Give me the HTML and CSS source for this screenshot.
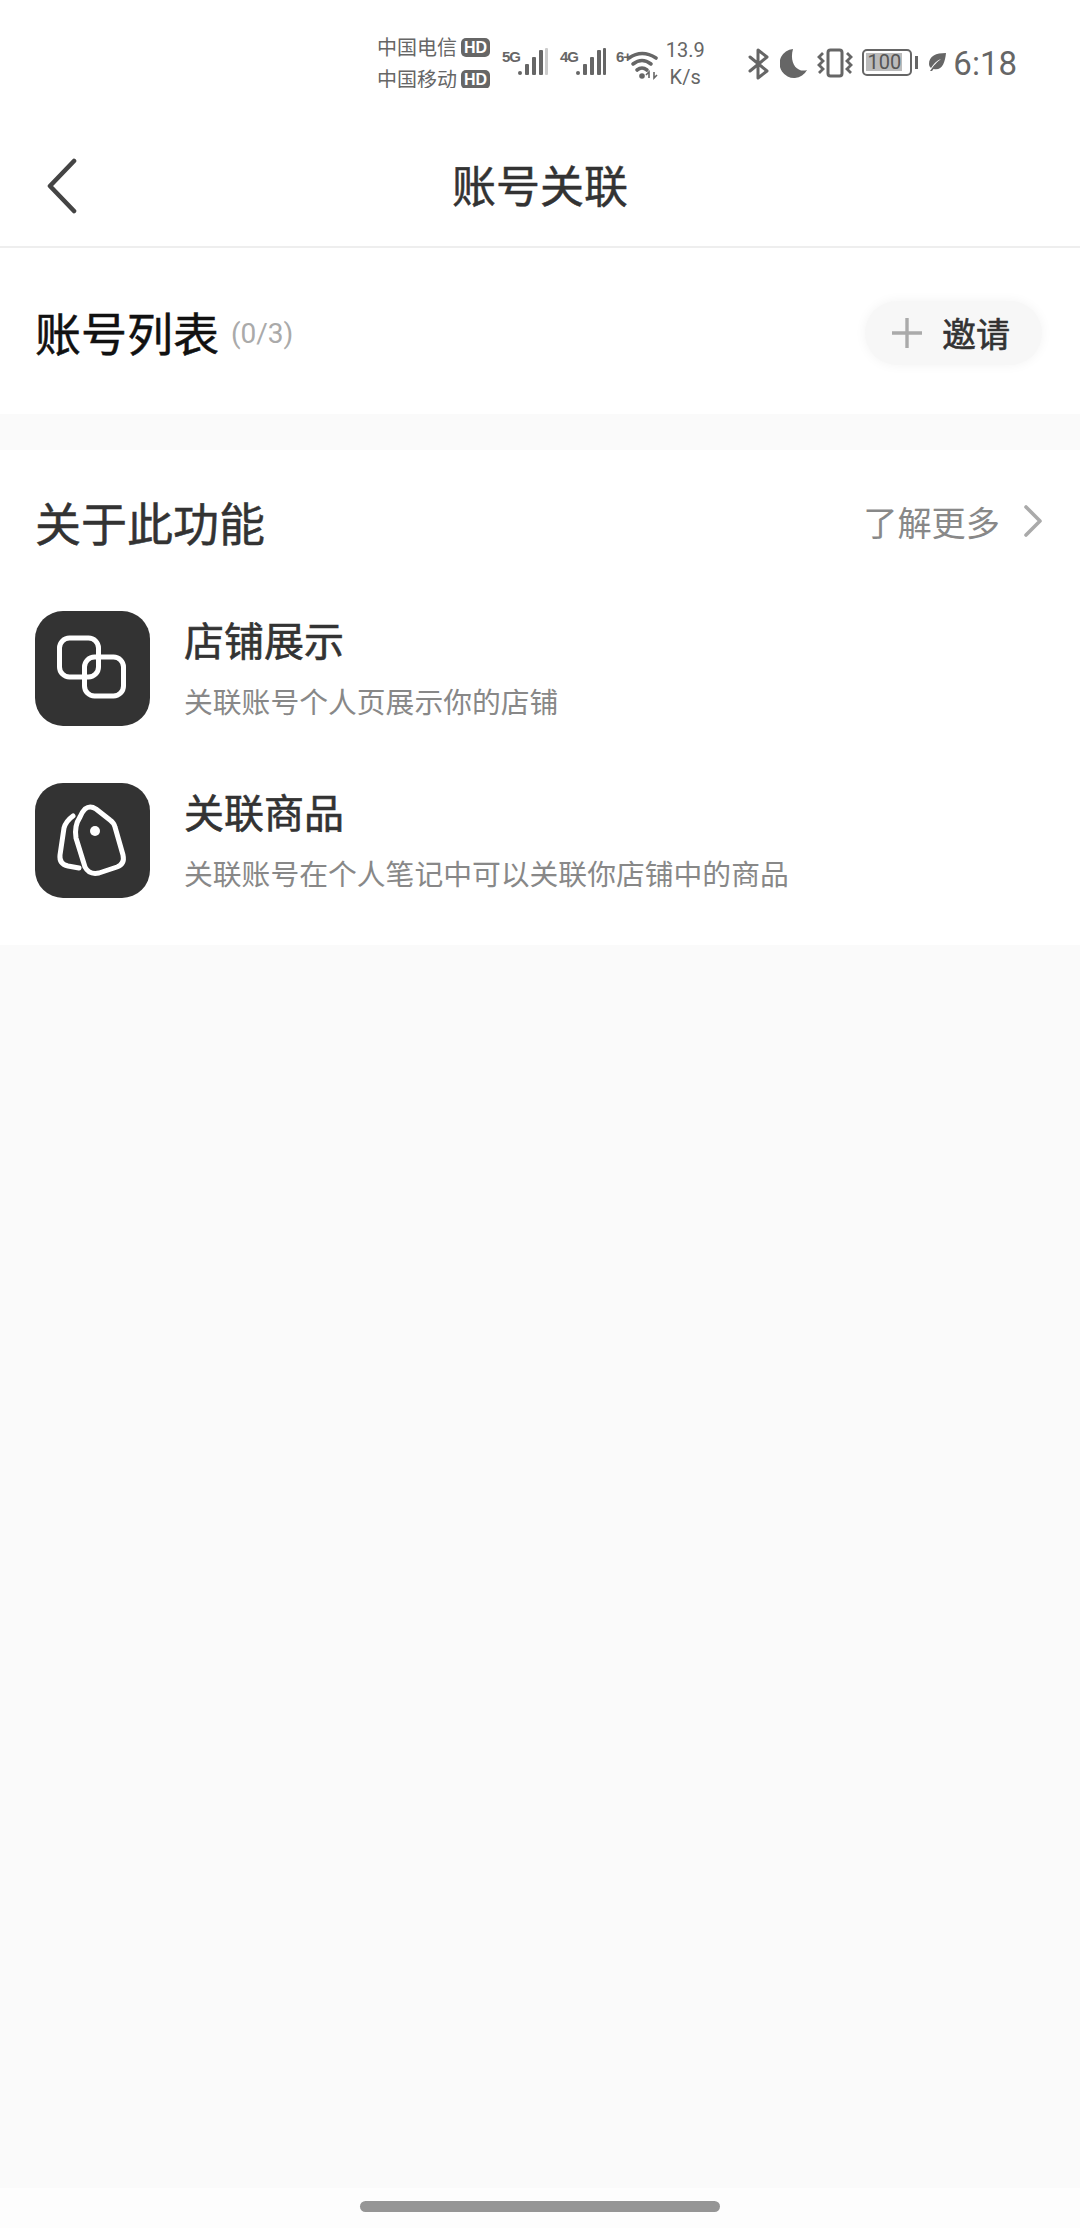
FILE: index.html
```html
<!DOCTYPE html>
<html>
<head>
    <title>账号关联</title>
    <meta charset="utf-8">
    <link rel="stylesheet" href="styles.css">
</head>
<body>
    <div class="status-bar">
        <div class="carriers">
            <div class="carrier">中国电信<span class="hd">HD</span></div>
            <div class="carrier">中国移动<span class="hd">HD</span></div>
        </div>
        <div class="signal">
            <span class="net">5G</span>
            <svg width="31" height="30" viewBox="0 0 31 30"><g fill="#666"><rect x="0" y="24" width="4" height="4" rx="2"/><rect x="7" y="17" width="4" height="11" rx="1"/><rect x="14" y="10" width="4" height="18" rx="1"/><rect x="21" y="3" width="4" height="25" rx="1"/></g><rect x="27" y="1" width="3" height="27" rx="1" fill="#ccc"/></svg>
        </div>
        <div class="signal">
            <span class="net">4G</span>
            <svg width="31" height="30" viewBox="0 0 31 30"><g fill="#666"><rect x="0" y="24" width="4" height="4" rx="2"/><rect x="7" y="17" width="4" height="11" rx="1"/><rect x="14" y="10" width="4" height="18" rx="1"/><rect x="21" y="3" width="4" height="25" rx="1"/><rect x="27" y="1" width="3" height="27" rx="1"/></g></svg>
        </div>
        <div class="wifi">
            <span class="net net-wifi">6+</span>
            <svg width="31" height="32" viewBox="0 0 31 32"><g fill="none" stroke="#666" stroke-width="3.6" stroke-linecap="round"><path d="M2 10 Q15 1 29 10"/><path d="M6 16 Q15 9 24 16"/><path d="M10 22 Q15 18 20 22"/></g><circle cx="15" cy="28" r="2.8" fill="#666"/><path d="M22 30v-6l-3 3M27 24v6l3-3" fill="none" stroke="#666" stroke-width="1.6"/></svg>
        </div>
        <div class="speed"><span>13.9</span><span>K/s</span></div>
        <svg class="ic-bt" width="22" height="32" viewBox="0 0 22 32"><path d="M2 9 L19 23 L10 30 V2 L19 9 L2 23" fill="none" stroke="#666" stroke-width="3" stroke-linejoin="round" stroke-linecap="round"/></svg>
        <svg class="ic-moon" width="28" height="30" viewBox="0 0 28 30"><path d="M13 1 A14.5 14.5 0 1 0 27 22 C17 25 9 15 13 1Z" fill="#666"/></svg>
        <svg class="ic-vib" width="36" height="30" viewBox="0 0 36 30"><rect x="11" y="2" width="14" height="26" rx="2.5" fill="none" stroke="#666" stroke-width="3"/><g fill="none" stroke="#666" stroke-width="2.8"><path d="M6 5 L2 9 L6 13 L2 17 L6 21 L2 25"/><path d="M30 5 L34 9 L30 13 L34 17 L30 21 L34 25"/></g></svg>
        <div class="battery"><div class="battery-box"><span class="battery-fill">100</span></div><i class="battery-nub"></i></div>
        <svg class="ic-leaf" width="20" height="20" viewBox="0 0 20 20"><path d="M19 1 C9 1 2 4 2 12 C2 14 3 15 4 16 C8 10 11 8 14 7 C10 10 7 13 3 19 L5 19 L6.5 17 C15 19 18 11 19 1Z" fill="#666"/></svg>
        <span class="clock">6:18</span>
    </div>

    <div class="nav-bar">
        <svg class="back" width="32" height="56" viewBox="0 0 32 56"><path d="M28 3 L4 28 L28 53" fill="none" stroke="#444" stroke-width="4.6" stroke-linecap="round" stroke-linejoin="round"/></svg>
        <h1 class="nav-title">账号关联</h1>
    </div>

    <div class="section account-list">
        <div class="account-head">
            <span class="section-title">账号列表</span>
            <span class="count">(0/3)</span>
        </div>
        <div class="invite">
            <svg width="30" height="30" viewBox="0 0 30 30"><path d="M15 0V30M0 15H30" stroke="#aaa" stroke-width="3.4"/></svg>
            <span>邀请</span>
        </div>
    </div>

    <div class="section about">
        <div class="about-head">
            <span class="about-title">关于此功能</span>
            <div class="more">
                <span>了解更多</span>
                <svg width="20" height="32" viewBox="0 0 20 32"><path d="M3 2 L17 16 L3 30" fill="none" stroke="#aaa" stroke-width="3.6" stroke-linecap="round" stroke-linejoin="round"/></svg>
            </div>
        </div>

        <div class="feature">
            <div class="feature-icon">
                <svg width="115" height="115" viewBox="0 0 115 115"><g fill="none" stroke="#fff" stroke-width="5"><rect x="24.5" y="27" width="39" height="39" rx="10"/><rect x="49.5" y="46" width="39" height="39" rx="10"/></g></svg>
            </div>
            <div class="feature-text">
                <div class="feature-name">店铺展示</div>
                <div class="feature-desc">关联账号个人页展示你的店铺</div>
            </div>
        </div>

        <div class="feature">
            <div class="feature-icon">
                <svg width="115" height="115" viewBox="0 0 115 115"><g fill="none" stroke="#fff" stroke-width="5" stroke-linecap="round" stroke-linejoin="round"><path d="M45 34 Q47 29 50 26 Q55 22 61 26 L75 37 Q79 40 80 44 L88 72 Q90 81 82 84 L64 90 Q54 92 50 84 L41 55 Q39 43 45 34Z"/><path d="M38 33 Q31 38 29 45 L25 72 Q24 81 33 83 L44 85"/></g><circle cx="60" cy="48" r="5" fill="#fff"/></svg>
            </div>
            <div class="feature-text">
                <div class="feature-name">关联商品</div>
                <div class="feature-desc">关联账号在个人笔记中可以关联你店铺中的商品</div>
            </div>
        </div>
    </div>

    <div class="filler"></div>

    <div class="home-bar"><i class="home-pill"></i></div>
</body>
</html>
```

FILE: styles.css
```css
html, body {
    margin: 0;
    padding: 0;
    height: 100%;
}

body {
    display: flex;
    flex-direction: column;
    background: #fafafa;
    color: #333;
    font-family: "Noto Sans CJK SC", "Noto Sans", sans-serif;
}

svg {
    display: block;
    flex: none;
}

/* status bar */
.status-bar {
    height: 88px;
    background: #fff;
    display: flex;
    align-items: flex-start;
    padding: 48px 63px 0 377px;
    box-sizing: border-box;
    color: #666;
}

.carriers {
    width: 113px;
    margin-top: -17px;
}

.carrier {
    display: flex;
    align-items: center;
    height: 32px;
    font-size: 20px;
    line-height: 32px;
    white-space: nowrap;
}

.hd {
    margin-left: 4px;
    padding: 0 3px;
    height: 19px;
    border-radius: 5px;
    background: #666;
    color: #fff;
    font: bold 16px/19px "Liberation Sans", sans-serif;
}

.signal {
    display: flex;
    align-items: flex-start;
    margin-left: 12px;
    width: 46px;
}

.signal:first-of-type {
    margin-left: 10px;
}

.signal svg {
    margin-top: -1px;
}

.net {
    font: bold 15px/18px "Liberation Sans", sans-serif;
    letter-spacing: -1px;
    width: 16px;
    flex: none;
}

.wifi {
    display: flex;
    width: 42px;
    margin-left: 10px;
}

.net-wifi {
    width: 11px;
    white-space: nowrap;
}

.speed {
    width: 44px;
    margin: -11px 0 0 7px;
    display: flex;
    flex-direction: column;
    align-items: center;
    font: 20px/27px "Roboto", sans-serif;
}

.ic-bt {
    margin: 0 0 0 43px;
}

.ic-moon {
    margin-left: 10px;
}

.ic-vib {
    margin-left: 9px;
}

.battery {
    display: flex;
    align-items: center;
    height: 28px;
    margin-left: 9px;
}

.battery-box {
    width: 50px;
    height: 27px;
    box-sizing: border-box;
    border: 2.5px solid #666;
    border-radius: 5px;
    padding: 2px;
}

.battery-fill {
    display: block;
    width: 36px;
    height: 18px;
    background: #bbb;
    color: #555;
    font: 20px/18px "Roboto", sans-serif;
    text-align: center;
}

.battery-nub {
    width: 3px;
    height: 13px;
    margin-left: 3px;
    background: #666;
}

.ic-leaf {
    margin: 4px 0 0 9px;
}

.clock {
    margin: -6px 0 0 6px;
    font: 33px/44px "Roboto", sans-serif;
}

/* title bar */
.nav-bar {
    position: relative;
    height: 160px;
    padding-top: 34px;
    background: #fff;
    border-bottom: 2px solid #eee;
    box-sizing: border-box;
    display: flex;
    align-items: center;
    justify-content: center;
}

.back {
    position: absolute;
    left: 46px;
    top: 70px;
}

.nav-title {
    margin: 0;
    font-size: 44px;
    font-weight: 400;
    -webkit-text-stroke: 0.5px #333;
    color: #333;
}

/* sections */
.section {
    background: #fff;
}

.account-list {
    height: 166px;
    margin-bottom: 36px;
    padding: 0 38px 0 35px;
    display: flex;
    align-items: center;
    justify-content: space-between;
}

.account-head {
    display: flex;
    align-items: center;
}

.section-title {
    font-size: 46px;
    color: #111;
    -webkit-text-stroke: 0.5px #111;
}

.count {
    margin: 4px 0 0 12px;
    font: 28px "Roboto", sans-serif;
    color: #aaa;
}

.invite {
    width: 177px;
    height: 64px;
    margin-top: 3px;
    box-sizing: border-box;
    padding-left: 27px;
    display: flex;
    align-items: center;
    background: #f7f7f7;
    border-radius: 32px;
    box-shadow: 0 0 12px #f3f3f3;
    font-size: 34px;
    font-weight: 400;
    -webkit-text-stroke: 0.6px #333;
}

.invite span {
    margin-left: 20px;
}

.about {
    height: 495px;
    padding: 0 35px;
}

.about-head {
    height: 161px;
    padding-bottom: 20px;
    box-sizing: border-box;
    display: flex;
    align-items: center;
    justify-content: space-between;
}

.about-title {
    font-size: 46px;
    font-weight: 400;
    -webkit-text-stroke: 0.5px #333;
}

.more {
    display: flex;
    align-items: center;
    font-size: 34.2px;
    color: #888;
    gap: 23px;
    margin-right: 2px;
}

.feature {
    display: flex;
    align-items: center;
    gap: 34px;
    margin-bottom: 57px;
}

.feature-icon {
    width: 115px;
    height: 115px;
    flex: none;
    border-radius: 28px;
    background: #333;
}

.feature-name {
    font-size: 40px;
    line-height: 56px;
    font-weight: 400;
    -webkit-text-stroke: 0.6px #333;
}

.feature-text {
    margin-top: -5px;
}

.feature-desc {
    margin-top: 13px;
    font-size: 28.8px;
    line-height: 42px;
    color: #888;
}

.filler {
    flex: 1;
}

/* bottom */
.home-bar {
    height: 40px;
    background: #fdfdfd;
    display: flex;
    justify-content: center;
    padding-top: 13px;
    box-sizing: border-box;
}

.home-pill {
    width: 360px;
    height: 11px;
    border-radius: 6px;
    background: #959595;
}
```
